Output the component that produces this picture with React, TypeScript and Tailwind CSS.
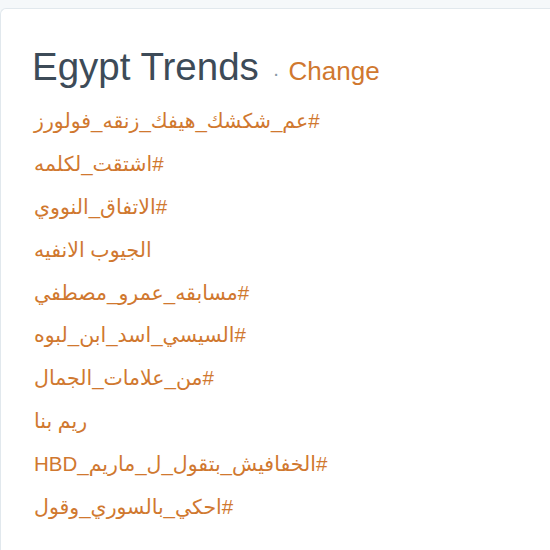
const trends = [
  "#عم_شكشك_هيفك_زنقه_فولورز",
  "#اشتقت_لكلمه",
  "#الاتفاق_النووي",
  "الجيوب الانفيه",
  "#مسابقه_عمرو_مصطفي",
  "#السيسي_اسد_ابن_لبوه",
  "#من_علامات_الجمال",
  "ريم بنا",
  "#الخفافيش_بتقول_ل_ماريم_HBD",
  "#احكي_بالسوري_وقول",
];

export default function App() {
  return (
    <div className="h-[550px] w-[550px] overflow-hidden bg-[#f5f8fa] pt-[8px] font-['Liberation_Sans',Arial,sans-serif]">
      <div className="h-full rounded-tl-[6px] border-l border-t border-[#e1e8ed] bg-white pl-[31px] pt-[37px]">
        <h3 className="flex items-baseline whitespace-nowrap leading-[42px]">
          <span className="text-[38.5px] text-[#3d4b58]">Egypt Trends</span>
          <span className="ml-[14px] mr-[9px] text-[20px] text-[#8899a6]">·</span>
          <a href="#" className="text-[26px] text-[#d0782f]">
            Change
          </a>
        </h3>
        <ul className="mt-[6px] flex flex-col pl-[2px]">
          {trends.map((t) => (
            <li key={t} className="flex h-[42.8px] items-center">
              <a
                href="#"
                dir="rtl"
                className="block leading-[26px] text-[20.5px] text-[#d0782f] font-['Liberation_Sans','DejaVu_Sans',sans-serif]"
              >
                {t}
              </a>
            </li>
          ))}
        </ul>
      </div>
    </div>
  );
}
